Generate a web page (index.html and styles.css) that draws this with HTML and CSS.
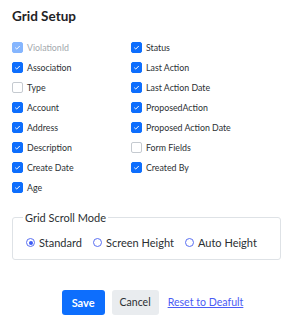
FILE: index.html
```html
<!DOCTYPE html>
<html lang="en">
<head>
    <meta charset="UTF-8">
    <title>Grid Setup</title>
    <link rel="stylesheet" href="styles.css">
</head>
<body>
    <div class="dialog">
        <h2 class="title">Grid Setup</h2>

        <div class="columns">
            <label class="check disabled"><span class="box on"><svg viewBox="0 0 12 12"><path d="M3 6.2 5 8.1 9 4"/></svg></span>ViolationId</label>
            <label class="check"><span class="box on"><svg viewBox="0 0 12 12"><path d="M3 6.2 5 8.1 9 4"/></svg></span>Status</label>
            <label class="check"><span class="box on"><svg viewBox="0 0 12 12"><path d="M3 6.2 5 8.1 9 4"/></svg></span>Association</label>
            <label class="check"><span class="box on"><svg viewBox="0 0 12 12"><path d="M3 6.2 5 8.1 9 4"/></svg></span>Last Action</label>
            <label class="check"><span class="box"></span>Type</label>
            <label class="check"><span class="box on"><svg viewBox="0 0 12 12"><path d="M3 6.2 5 8.1 9 4"/></svg></span>Last Action Date</label>
            <label class="check"><span class="box on"><svg viewBox="0 0 12 12"><path d="M3 6.2 5 8.1 9 4"/></svg></span>Account</label>
            <label class="check"><span class="box on"><svg viewBox="0 0 12 12"><path d="M3 6.2 5 8.1 9 4"/></svg></span>ProposedAction</label>
            <label class="check"><span class="box on"><svg viewBox="0 0 12 12"><path d="M3 6.2 5 8.1 9 4"/></svg></span>Address</label>
            <label class="check"><span class="box on"><svg viewBox="0 0 12 12"><path d="M3 6.2 5 8.1 9 4"/></svg></span>Proposed Action Date</label>
            <label class="check"><span class="box on"><svg viewBox="0 0 12 12"><path d="M3 6.2 5 8.1 9 4"/></svg></span>Description</label>
            <label class="check"><span class="box"></span>Form Fields</label>
            <label class="check"><span class="box on"><svg viewBox="0 0 12 12"><path d="M3 6.2 5 8.1 9 4"/></svg></span>Create Date</label>
            <label class="check"><span class="box on"><svg viewBox="0 0 12 12"><path d="M3 6.2 5 8.1 9 4"/></svg></span>Created By</label>
            <label class="check"><span class="box on"><svg viewBox="0 0 12 12"><path d="M3 6.2 5 8.1 9 4"/></svg></span>Age</label>
        </div>

        <fieldset class="scroll-mode">
            <legend>Grid Scroll Mode</legend>
            <label class="radio"><span class="dot on"></span>Standard</label>
            <label class="radio"><span class="dot"></span>Screen Height</label>
            <label class="radio"><span class="dot"></span>Auto Height</label>
        </fieldset>

        <div class="actions">
            <button class="button">Save</button>
            <button class="button button-secondary">Cancel</button>
            <a href="#" class="reset-link">Reset to Deafult</a>
        </div>
    </div>
</body>
</html>
```

FILE: styles.css
```css
* {
    box-sizing: border-box;
    margin: 0;
    padding: 0;
}

body {
    background-color: #fff;
    font-family: Lato, sans-serif;
    color: #2b2f33;
}

.dialog {
    padding: 6px 12px 12px;
}

.title {
    font-size: 13.5px;
    font-weight: 700;
    line-height: 20px;
    margin-bottom: 11px;
    color: #1f2326;
}

.columns {
    display: grid;
    grid-template-columns: 119px 1fr;
    grid-auto-rows: 20px;
}

.check {
    display: flex;
    align-items: center;
    gap: 4px;
    font-size: 8.8px;
}

.box {
    width: 11px;
    height: 11px;
    border: 1px solid #c5cad0;
    border-radius: 2px;
    background: #fff;
    flex-shrink: 0;
}

.box.on {
    border-color: #0d6efd;
    background: #0d6efd;
}

.box svg {
    display: block;
    width: 9px;
    height: 9px;
    fill: none;
    stroke: #fff;
    stroke-width: 1.3;
}

.check.disabled {
    color: #a3a8ad;
}

.check.disabled .box {
    background: #86b6fe;
    border-color: #86b6fe;
}

.scroll-mode {
    margin-top: 13px;
    border: 1px solid #dee2e6;
    border-radius: 3px;
    padding: 6px 13px 8px;
}

.scroll-mode legend {
    font-size: 11px;
    line-height: 15px;
    padding: 0 2px;
    margin-left: -3px;
}

.radio {
    display: inline-flex;
    align-items: center;
    gap: 4px;
    font-size: 11px;
    line-height: 16px;
    margin-right: 7px;
}

.radio:last-child {
    margin-right: 0;
}

.dot {
    width: 9px;
    height: 9px;
    border: 1px solid #5a6ff2;
    border-radius: 50%;
    position: relative;
}

.dot.on::after {
    content: "";
    position: absolute;
    inset: 1.5px;
    border-radius: 50%;
    background: #3d5cf5;
}

.actions {
    display: flex;
    justify-content: center;
    align-items: center;
    gap: 7px;
    padding-left: 12px;
    margin-top: 30px;
}

.button {
    background-color: #0d6efd;
    color: white;
    border: none;
    height: 25px;
    padding: 0 10px;
    border-radius: 3px;
    font-family: inherit;
    font-size: 11px;
    font-weight: 700;
}

.button-secondary {
    background-color: #e9ecef;
    color: #2b2f33;
    font-weight: 400;
    font-size: 10.5px;
    padding: 0 8px;
}

.reset-link {
    color: #4b5cf5;
    font-size: 10.6px;
    margin-left: 2px;
}
```
